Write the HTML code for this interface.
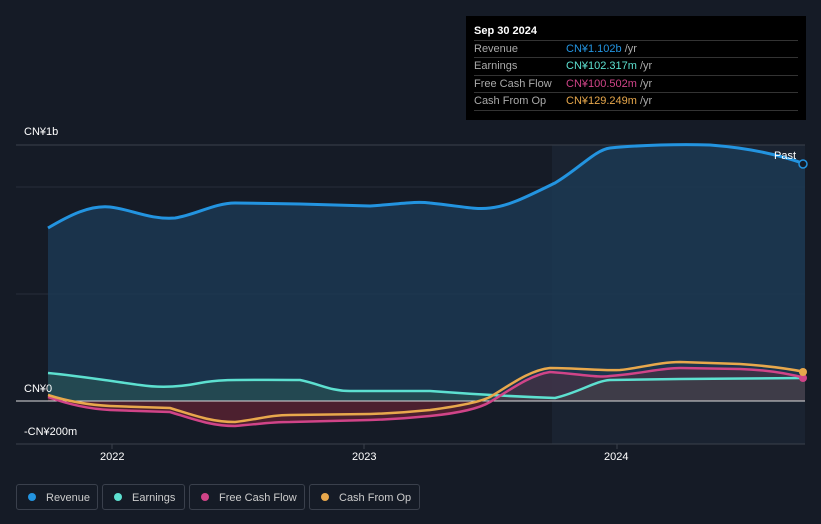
<!DOCTYPE html><html><head><style>
body{margin:0;width:821px;height:524px;background:#151b26;font-family:"Liberation Sans",sans-serif;position:relative;overflow:hidden}
.t{position:absolute;color:#fff;font-size:11px}
.tip{position:absolute;left:466px;top:16px;width:340px;height:104px;background:#000}
.tip .h{position:absolute;left:8px;top:9px;color:#fff;font-size:11px;font-weight:bold}
.row{position:absolute;left:8px;width:324px;border-top:1px solid #333;height:17px;font-size:11px;line-height:17px;color:#aaa}
.row span.v{position:absolute;left:92px}
.leg{position:absolute;top:484px;height:26px;border:1px solid #3a404c;border-radius:3px;color:#ccc;font-size:11px;line-height:26px;box-sizing:border-box}
.leg i{display:inline-block;width:8px;height:8px;border-radius:50%;margin:0 10px 0 11px;vertical-align:-0px}
</style></head><body>
<svg width="821" height="524" style="position:absolute;left:0;top:0">
<rect x="552" y="145" width="253" height="299" fill="#1a2331"/>
<line x1="16" y1="145" x2="805" y2="145" stroke="#3a404c"/>
<line x1="16" y1="187" x2="805" y2="187" stroke="#262d3a"/>
<line x1="16" y1="294" x2="805" y2="294" stroke="#262d3a"/>
<line x1="16" y1="444" x2="805" y2="444" stroke="#3a404c"/>
<path d="M48,228 C70,215 90,205 110,207 C130,209 150,220 175,218 C195,215 215,203 235,203 L300,204 L370,206 C400,204 415,201 430,203 C460,206 475,210 490,208 C510,206 530,195 555,183 C580,168 595,150 610,148 C640,145 680,144 710,145 C750,148 780,155 805,164 L805,401 L48,401Z" fill="#1c3a55" opacity=".8"/>
<path d="M48,373 C80,376 110,381 140,385 C160,388 180,387 200,383 C220,379 235,380 300,380 C320,384 330,391 350,391 L430,391 C470,394 500,396 555,398 C580,392 595,381 610,380 L680,379 L805,378 L805,401 L48,401Z" fill="#2a5755" opacity=".6"/>
<path d="M48,397 C70,405 90,409 110,410 L170,412 C190,418 210,426 235,426 C260,424 270,422 290,422 L370,420 C400,419 420,417 430,416 C460,413 480,408 490,402 L401,401 L48,401Z" fill="#5a2232" opacity=".8"/>
<path d="M490,401 C510,390 530,375 550,372 C580,374 600,378 610,376 C640,374 660,368 680,368 L740,369 C770,370 790,374 805,378 L805,401Z" fill="#5a3040" opacity=".5"/>
<line x1="16" y1="401" x2="805" y2="401" stroke="#ddd" stroke-width="1"/>
<path d="M48,228 C70,215 90,205 110,207 C130,209 150,220 175,218 C195,215 215,203 235,203 L300,204 L370,206 C400,204 415,201 430,203 C460,206 475,210 490,208 C510,206 530,195 555,183 C580,168 595,150 610,148 C640,145 680,144 710,145 C750,148 780,155 805,164" fill="none" stroke="#2394e0" stroke-width="3"/>
<path d="M48,373 C80,376 110,381 140,385 C160,388 180,387 200,383 C220,379 235,380 300,380 C320,384 330,391 350,391 L430,391 C470,394 500,396 555,398 C580,392 595,381 610,380 L680,379 L805,378" fill="none" stroke="#5de0d0" stroke-width="2.5"/>
<path d="M48,397 C70,405 90,409 110,410 L170,412 C190,418 210,426 235,426 C260,424 270,422 290,422 L370,420 C400,419 420,417 430,416 C460,413 480,408 490,402 C510,390 530,375 550,372 C580,374 600,378 610,376 C640,374 660,368 680,368 L740,369 C770,370 790,374 805,378" fill="none" stroke="#d04488" stroke-width="2.5"/>
<path d="M48,395 C70,402 90,405 110,406 L170,408 C190,414 210,422 235,422 C260,419 270,415 290,415 L370,414 C400,413 420,411 430,410 C460,406 480,402 490,397 C510,385 530,370 550,368 C580,368 600,371 620,370 C640,368 660,362 680,362 L740,364 C770,366 790,369 805,372" fill="none" stroke="#e8a84c" stroke-width="2.5"/>
<circle cx="803" cy="164" r="4" fill="#151b26" stroke="#2394e0" stroke-width="1.5"/>
<circle cx="803" cy="378" r="4" fill="#d04488"/>
<circle cx="803" cy="372" r="4" fill="#e8a84c"/>
<line x1="112" y1="444" x2="112" y2="449" stroke="#3a404c"/>
<line x1="364" y1="444" x2="364" y2="449" stroke="#3a404c"/>
<line x1="617" y1="444" x2="617" y2="449" stroke="#3a404c"/>
</svg>
<div class="t" style="left:24px;top:126px">CN¥1b</div>
<div class="t" style="left:24px;top:383px">CN¥0</div>
<div class="t" style="left:24px;top:426px">-CN¥200m</div>
<div class="t" style="left:774px;top:150px">Past</div>
<div class="t" style="left:100px;top:451px">2022</div>
<div class="t" style="left:352px;top:451px">2023</div>
<div class="t" style="left:604px;top:451px">2024</div>
<div class="tip"><div class="h">Sep 30 2024</div>
<div class="row" style="top:24px">Revenue<span class="v"><b style="font-weight:normal;color:#2394e0">CN¥1.102b</b> /yr</span></div>
<div class="row" style="top:41px">Earnings<span class="v"><b style="font-weight:normal;color:#5de0d0">CN¥102.317m</b> /yr</span></div>
<div class="row" style="top:59px">Free Cash Flow<span class="v"><b style="font-weight:normal;color:#d04488">CN¥100.502m</b> /yr</span></div>
<div class="row" style="top:76px;border-bottom:1px solid #333">Cash From Op<span class="v"><b style="font-weight:normal;color:#e8a84c">CN¥129.249m</b> /yr</span></div>
</div>
<div class="leg" style="left:16px;width:82px"><i style="background:#2394e0"></i>Revenue</div>
<div class="leg" style="left:102px;width:83px"><i style="background:#5de0d0"></i>Earnings</div>
<div class="leg" style="left:189px;width:116px"><i style="background:#d04488"></i>Free Cash Flow</div>
<div class="leg" style="left:309px;width:111px"><i style="background:#e8a84c"></i>Cash From Op</div>
</body></html>
